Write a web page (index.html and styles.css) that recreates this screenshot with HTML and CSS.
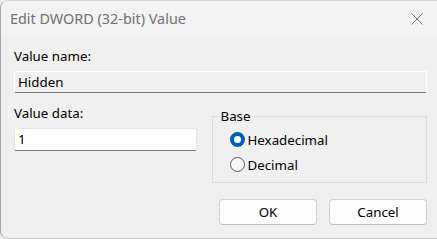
FILE: index.html
```html
<!DOCTYPE html>
<html lang="en">
<head>
  <meta charset="UTF-8" />
  <title>Edit DWORD (32-bit) Value</title>
  <link rel="stylesheet" href="styles.css">
</head>
<body>
  <div class="window">
    <div class="titlebar">
      <span class="title">Edit DWORD (32-bit) Value</span>
      <svg class="close" width="12" height="12" viewBox="0 0 12 12">
        <path d="M0.5 0.5 L11.5 11.5 M11.5 0.5 L0.5 11.5" stroke="#707070" stroke-width="1" fill="none" />
      </svg>
    </div>

    <div class="content">
      <div class="label">Value name:</div>
      <div class="field readonly">Hidden</div>

      <div class="row">
        <div class="data-col">
          <div class="label">Value data:</div>
          <div class="field data">1</div>
        </div>

        <fieldset class="base">
          <legend>Base</legend>
          <div class="radio">
            <span class="dot checked"></span>
            <span>Hexadecimal</span>
          </div>
          <div class="radio">
            <span class="dot"></span>
            <span>Decimal</span>
          </div>
        </fieldset>
      </div>

      <div class="buttons">
        <div class="btn">OK</div>
        <div class="btn">Cancel</div>
      </div>
    </div>
  </div>
</body>
</html>
```

FILE: styles.css
```css
body {
  margin: 0;
  padding: 0;
  background: #f0f0f0;
  font-family: "Noto Sans", "Open Sans", sans-serif;
  font-size: 13.3px;
  color: #000;
  overflow: hidden;
}

.window {
  box-sizing: border-box;
  width: 437px;
  height: 239px;
  background: #f0f0f0;
  border-left: 1px solid #a8a8a8;
  border-top: 1px solid #d8d8d8;
  border-bottom: 1px solid #c8c8c8;
  border-radius: 8px 0 0 8px;
  overflow: hidden;
}

.titlebar {
  height: 34px;
  background: #f3f3f3;
  display: flex;
  align-items: center;
  justify-content: space-between;
  padding: 0 14px 0 9px;
}

.title {
  color: #727272;
  font-size: 14.4px;
}

.close {
  display: block;
  margin-top: 1px;
}

.content {
  padding: 12px 10px 0 13px;
}

.label {
  line-height: 19px;
  height: 19px;
}

.field {
  box-sizing: border-box;
  height: 22px;
  line-height: 20px;
  padding: 0 3px;
  border: 1px solid #fff;
  border-bottom: 1px solid #7a7a7a;
  border-radius: 2px;
}

.readonly {
  margin-top: 5px;
  width: 413px;
  background: #f0f0f0;
}

.row {
  display: flex;
  align-items: flex-start;
  margin-top: 11px;
}

.data-col {
  width: 183px;
}

.data {
  margin-top: 5px;
  height: 23px;
  background: #fff;
  border-color: #e6e6e6;
  border-bottom-color: #7a7a7a;
}

.base {
  box-sizing: border-box;
  margin: 4px 0 0 15px;
  width: 216px;
  height: 75px;
  padding: 3px 0 0 17px;
  border: 1px solid #dcdcdc;
  border-radius: 0;
}

.base legend {
  padding: 0 1px;
  margin-left: -10px;
  line-height: 16px;
}

.radio {
  display: flex;
  align-items: center;
  gap: 3px;
  height: 25px;
}

.dot {
  box-sizing: border-box;
  width: 15px;
  height: 15px;
  border-radius: 50%;
  border: 1px solid #5a5a5a;
  background: #f8f8f8;
}

.dot.checked {
  border: 4px solid #005fb8;
  background: #fff;
}

.buttons {
  display: flex;
  justify-content: flex-end;
  gap: 12px;
  margin-top: 16px;
  padding-right: 0;
}

.btn {
  box-sizing: border-box;
  width: 98px;
  height: 26px;
  line-height: 24px;
  text-align: center;
  background: #fdfdfd;
  border: 1px solid #d0d0d0;
  border-bottom-color: #bdbdbd;
  border-radius: 4px;
}
```
